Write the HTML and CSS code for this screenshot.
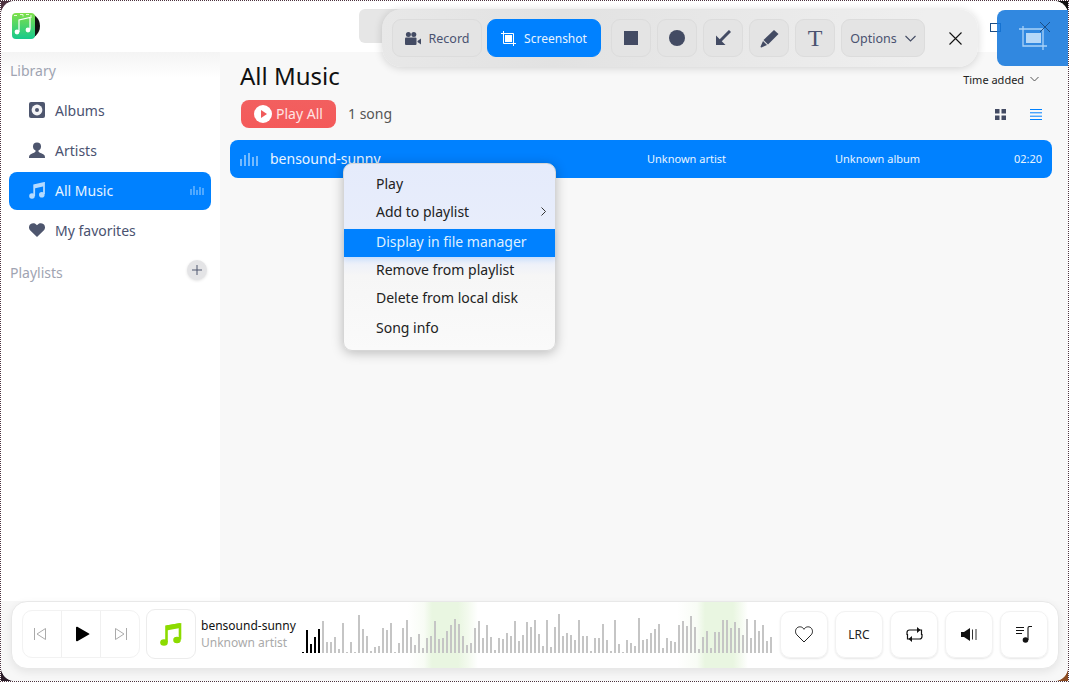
FILE: index.html
```html
<!DOCTYPE html>
<html lang="en">
<head>
  <meta charset="UTF-8" />
  <title>Music</title>
  <link rel="stylesheet" href="styles.css">
</head>
<body>
<div class="screen">
  <div class="window">

    <!-- Title bar -->
    <div class="titlebar">
      <svg class="logo" width="28" height="26" viewBox="0 0 28 26">
        <defs><linearGradient id="logoGrad" x1="0" y1="0" x2="0" y2="1"><stop offset="0" stop-color="#7fe04a"/><stop offset="1" stop-color="#16c98c"/></linearGradient></defs>
        <circle cx="15" cy="13" r="13" fill="#111"/>
        <rect x="0" y="0" width="23" height="26" rx="4" fill="url(#logoGrad)"/>
        <path d="M2 2.500h3M8 1.500h3v2M14 1.500h3M19 2v3" stroke="#e4fbd8" stroke-width="1" fill="none"/>
        <path d="M7 19V7l11-2.500v12" fill="none" stroke="#fff" stroke-width="1.200"/>
        <circle cx="5" cy="19" r="2.400" fill="#fff"/><circle cx="16" cy="17" r="2.400" fill="#fff"/>
      </svg>
      <div class="searchbox"></div>
      <span class="win-max"></span>
      <svg class="win-close" width="12" height="12" viewBox="0 0 12 12"><path d="M1 1l10 10M11 1L1 11" stroke="#1d4f86" stroke-width="1" fill="none"/></svg>
    </div>

    <div class="main">
      <!-- Sidebar -->
      <div class="sidebar">
        <div class="side-label">Library</div>
        <div class="side-item">
          <svg width="16" height="16" viewBox="0 0 16 16"><rect width="16" height="16" rx="2" fill="#4e566e"/><circle cx="8" cy="8" r="5.400" fill="#f4f4f6"/><circle cx="8" cy="8" r="2" fill="#4e566e"/></svg>
          <span>Albums</span>
        </div>
        <div class="side-item">
          <svg width="16" height="16" viewBox="0 0 16 16"><circle cx="8" cy="4.400" r="4" fill="#4e566e"/><path d="M6.500 8h3v1.600c0 1 3.400 1.600 5.500 3.200.7.6 1 1.400 1 3.200H0c0-1.800.3-2.600 1-3.200 2.100-1.600 5.500-2.200 5.500-3.200z" fill="#4e566e"/></svg>
          <span>Artists</span>
        </div>
        <div class="side-item active">
          <svg width="16" height="17" viewBox="0 0 16 17"><path d="M5.200 14V3.200L15 1v11" fill="none" stroke="#b5dbff" stroke-width="1.800"/><path d="M5.200 3.200L15 1v3.200L5.200 6.400z" fill="#b5dbff"/><circle cx="3" cy="14" r="2.800" fill="#b5dbff"/><circle cx="12.800" cy="12.800" r="2.800" fill="#b5dbff"/></svg>
          <span>All Music</span>
          <svg class="mini-bars" width="14" height="10" viewBox="0 0 14 10"><path d="M1 4v6M4 1v9M7 5v5M10 2v8M13 3v7" stroke="#9fd0ff" stroke-width="1" fill="none"/></svg>
        </div>
        <div class="side-item">
          <svg width="16" height="14" viewBox="0 0 16 14"><path d="M8 14L1.300 7.600C-.6 5.700-.3 2.800 1.400 1.300 3.300-.4 6.200-.2 8 2.200 9.800-.2 12.700-.4 14.600 1.300c1.700 1.500 2 4.400.1 6.300z" fill="#4e566e"/></svg>
          <span>My favorites</span>
        </div>
        <div class="side-label playlists">
          Playlists
          <span class="add-btn"><svg width="10" height="10" viewBox="0 0 10 10"><path d="M5 0v10M0 5h10" stroke="#4e566e" stroke-width="1" fill="none"/></svg></span>
        </div>
      </div>

      <!-- Song list -->
      <div class="content">
        <div class="head-row">
          <h1>All Music</h1>
          <div class="sort">Time added
            <svg width="9" height="6" viewBox="0 0 9 6"><path d="M.5 1l4 4 4-4" stroke="#555" stroke-width="1" fill="none"/></svg>
          </div>
        </div>
        <div class="action-row">
          <div class="play-all">
            <svg width="18" height="18" viewBox="0 0 18 18"><circle cx="9" cy="9" r="9" fill="#fff"/><path d="M7 5l6 4-6 4z" fill="#f05a5a"/></svg>
            Play All
          </div>
          <span class="count">1 song</span>
          <svg class="view-grid" width="11" height="11" viewBox="0 0 11 11"><path d="M0 0h4.500v4.500H0zM6.500 0H11v4.500H6.500zM0 6.500h4.500V11H0zM6.500 6.500H11V11H6.500z" fill="#434b63"/></svg>
          <svg class="view-list" width="12" height="11" viewBox="0 0 12 11"><path d="M0 .5h12M0 3.800h12M0 7.200h12M0 10.500h12" stroke="#0081ff" stroke-width="1" fill="none"/></svg>
        </div>
        <div class="song-row">
          <svg width="18" height="13" viewBox="0 0 18 13"><path d="M1 6v7M5 2v11M9 0v13M13 4v9M17 3v10" stroke="#e8f4ff" stroke-width="1" fill="none"/></svg>
          <span class="song-title">bensound-sunny</span>
          <span class="song-artist">Unknown artist</span>
          <span class="song-album">Unknown album</span>
          <span class="song-time">02:20</span>
        </div>
      </div>
    </div>

    <!-- Player -->
    <div class="player-wrap">
      <div class="player">
        <div class="transport">
          <div class="t-btn"><svg class="t-prev" width="12" height="12" viewBox="0 0 12 12"><path d="M.5 0v12M11.500.5v11L3 6z" stroke="#aaa" stroke-width="1" fill="none"/></svg></div>
          <div class="t-btn mid"><svg class="t-play" width="15" height="16" viewBox="0 0 15 16"><path d="M1 1.500v13c0 .7.7 1.100 1.300.7L14 8.600c.5-.3.5-.9 0-1.200L2.300.8C1.700.4 1 .8 1 1.500z" fill="#000"/></svg></div>
          <div class="t-btn"><svg class="t-next" width="12" height="12" viewBox="0 0 12 12"><path d="M11.500 0v12M.5.5v11L9 6z" stroke="#aaa" stroke-width="1" fill="none"/></svg></div>
        </div>
        <div class="cover">
          <svg width="22" height="26" viewBox="0 0 22 26"><path d="M6.500 21V5.500L20 3.500v15" fill="none" stroke="#8cdb00" stroke-width="2.600"/><path d="M6.500 4.500L20 2v5L6.500 9.500z" fill="#8cdb00"/><ellipse cx="4" cy="21.500" rx="3.800" ry="3.200" fill="#8cdb00"/><ellipse cx="17" cy="19" rx="3.800" ry="3.200" fill="#8cdb00"/></svg>
        </div>
        <div class="track-info">
          <div class="track-title">bensound-sunny</div>
          <div class="track-artist">Unknown artist</div>
        </div>
        <div class="wave" id="wave"></div>
        <div class="p-buttons">
          <div class="p-btn"><svg width="18" height="17" viewBox="0 0 18 17"><path d="M9 16L1.900 8.900C-.1 6.900.2 3.500 2 1.900 4 .2 7.400.4 9 3.300 10.600.4 14 .2 16 1.900c1.800 1.600 2.100 5 .1 7z" fill="none" stroke="#222" stroke-width="1"/></svg></div>
          <div class="p-btn lrc">LRC</div>
          <div class="p-btn"><svg width="17" height="15" viewBox="0 0 17 15"><path d="M1 8V5.500C1 4 2 3 3.500 3H15.500V8M16 7v2.500c0 1.500-1 2.500-2.500 2.500H1.500V7" fill="none" stroke="#111" stroke-width="1.200"/><path d="M11 0l3.500 3L11 6zM6 9l-3.500 3L6 15z" fill="#111"/></svg></div>
          <div class="p-btn"><svg width="16" height="13" viewBox="0 0 16 13"><path d="M0 4h3l6-4v13L3 9H0z" fill="#111"/><path d="M11.500 1.500v10M15 1v11" stroke="#333" stroke-width="1" fill="none"/></svg></div>
          <div class="p-btn"><svg width="17" height="17" viewBox="0 0 17 17"><path d="M0 1.500h8M0 4.500h8M0 7.500h6" stroke="#111" stroke-width="1" fill="none"/><path d="M12 14V2c0-1 .6-1.500 1.500-1.500H16" stroke="#111" stroke-width="1.100" fill="none"/><circle cx="9.500" cy="14" r="2.800" fill="#111"/></svg></div>
        </div>
      </div>
    </div>
  </div>

  <!-- Context menu -->
  <div class="menu">
    <div class="menu-item">Play</div>
    <div class="menu-item">Add to playlist
      <svg width="5" height="9" viewBox="0 0 5 9"><path d="M.5.5l4 4-4 4" stroke="#333" stroke-width="1" fill="none"/></svg>
    </div>
    <div class="menu-item selected">Display in file manager</div>
    <div class="menu-item">Remove from playlist</div>
    <div class="menu-item">Delete from local disk</div>
    <div class="menu-item last">Song info</div>
  </div>

  <!-- Screen capture toolbar -->
  <div class="toolbar">
    <div class="tool wide record">
      <svg width="16" height="13" viewBox="0 0 16 13"><circle cx="3.400" cy="2.600" r="2.500" fill="#434b63"/><circle cx="8.800" cy="2.600" r="2.500" fill="#434b63"/><rect x="0" y="5.500" width="11.500" height="7.500" rx="1" fill="#434b63"/><path d="M12.500 9l3.500-2.500v6L12.500 10z" fill="#434b63"/></svg>
      Record
    </div>
    <div class="tool wide shot">
      <svg width="15" height="15" viewBox="0 0 15 15"><path d="M2.500 0v12.500H15M0 2.500h12.500V15" fill="none" stroke="#fff" stroke-width="1"/><rect x="4" y="4" width="7" height="7" fill="#fff"/></svg>
      Screenshot
    </div>
    <div class="tool"><span class="shape-rect"></span></div>
    <div class="tool"><span class="shape-circle"></span></div>
    <div class="tool"><svg width="16" height="16" viewBox="0 0 16 16"><path d="M15 1L5 11" stroke="#434b63" stroke-width="3" fill="none"/><path d="M1 5.500V15h9.500z" fill="#434b63"/></svg></div>
    <div class="tool"><svg width="19" height="19" viewBox="0 0 19 19"><path d="M14 1l4.500 4L8 15.500 3.500 11z" fill="#434b63"/><path d="M3 12l4 4-5.500 2.500c-.5.200-1.100-.3-.9-.9z" fill="#434b63"/></svg></div>
    <div class="tool serif-t">T</div>
    <div class="tool wide options">
      Options
      <svg width="11" height="7" viewBox="0 0 11 7"><path d="M.5 1l5 5 5-5" stroke="#434b63" stroke-width="1.100" fill="none"/></svg>
    </div>
    <svg class="tool-close" width="13" height="13" viewBox="0 0 13 13"><path d="M.5.5l12 12M12.500.5l-12 12" stroke="#111" stroke-width="1.100" fill="none"/></svg>
  </div>

  <!-- Capture mode badge -->
  <div class="crop-badge">
    <svg width="28" height="24" viewBox="0 0 28 24"><path d="M4 0v20h24M0 3h24v21" fill="none" stroke="#a9d2f7" stroke-width="1.300"/><rect x="7" y="7" width="15" height="10" fill="#b6d8f8"/></svg>
  </div>
</div>
<script src="wave.js"></script>
</body>
</html>
```

FILE: styles.css
```css
* { box-sizing: border-box; margin:0; padding:0 }
html, body { height: 100%; }
body {
  font-family: 'Noto Sans', sans-serif;
  background: #fff;
  overflow: hidden;
}

.screen {
  position: relative;
  height: 100vh;
  border: 1px dotted #4d3340;
  background: conic-gradient(#111 25%, #8a4a20 25% 50%, #2a1c28 50% 75%, #4d3340 75%);
  background-clip: padding-box;
  overflow: hidden;
}

.window {
  height: 100%;
  display: flex;
  flex-direction: column;
  background: #fff;
  border-radius: 14px;
  overflow: hidden;
}

/* title bar */
.titlebar {
  height: 51px;
  flex-shrink: 0;
  display: flex;
  align-items: flex-start;
  background: #fff;
}
.logo { margin: 12px 0 0 11px; }
.searchbox {
  width: 330px;
  height: 34px;
  margin: 8px 0 0 319px;
  background: #e6e6e6;
  border-radius: 6px;
}
.win-max {
  width: 11px;
  height: 9px;
  margin: 22px 0 0 301px;
  border: 1px solid #1d4f86;
}
.win-close { margin: 20px 0 0 38px; position: relative; z-index: 5; }

.main { flex: 1; display: flex; min-height: 0; }

/* sidebar */
.sidebar {
  width: 219px;
  flex-shrink: 0;
  padding: 0 9px 0 8px;
  background: linear-gradient(#f4f4f4, #fff 26px);
}
.side-label {
  height: 36px;
  margin-bottom: 4px;
  padding: 0 1px;
  display: flex;
  align-items: center;
  font-size: 14px;
  color: #9fa4b2;
}
.side-item {
  height: 38px;
  margin-bottom: 2px;
  padding: 0 0 2px 20px;
  display: flex;
  align-items: center;
  gap: 10px;
  border-radius: 8px;
  font-size: 14px;
  color: #4a5270;
}
.side-item svg { flex-shrink: 0; }
.side-item.active { background: #0081ff; color: #e6f3ff; }
.mini-bars { margin-left: auto; margin-right: 7px; }
.playlists {
  justify-content: space-between;
  margin: 7px 0 0;
  height: 30px;
  padding-right: 4px;
}
.add-btn {
  width: 20px;
  height: 20px;
  margin-top: -4px;
  display: flex;
  align-items: center;
  justify-content: center;
  border-radius: 50%;
  background: #e4e4e6;
  box-shadow: 0 1px 3px rgba(0,0,0,0.12);
}

/* song list */
.content {
  flex: 1;
  padding: 0 16px 0 10px;
  background: #f8f8f8;
}
.head-row {
  height: 48px;
  padding: 0 2px 2px 10px;
  display: flex;
  align-items: center;
  justify-content: space-between;
}
h1 { font-size: 24px; font-weight: 400; color: #111; }
.sort {
  margin-top: 8px;
  display: flex;
  align-items: center;
  gap: 6px;
  padding-right: 11px;
  font-size: 11px;
  color: #222;
}
.action-row {
  height: 28px;
  padding: 0 10px 0 11px;
  display: flex;
  align-items: center;
  font-size: 14px;
}
.play-all {
  width: 95px;
  height: 28px;
  padding: 0 0 2px 13px;
  display: flex;
  align-items: center;
  gap: 4px;
  border-radius: 8px;
  background: linear-gradient(#f25f5f, #f45a5a);
  color: #ffe3e3;
}
.play-all svg { margin-top: 2px; }
.count { margin: 0 0 2px 12px; color: #555; }
.view-grid { margin-left: auto; }
.view-list { margin-left: 24px; }
.song-row {
  height: 38px;
  margin-top: 12px;
  padding: 0 10px 2px;
  display: flex;
  align-items: center;
  border-radius: 8px;
  background: #0081ff;
  color: #e8f4ff;
  font-size: 11px;
}
.song-row svg { margin-top: 2px; }
.song-title { margin-left: 12px; width: 377px; font-size: 14px; }
.song-artist { width: 188px; }
.song-album { width: 179px; }

/* player */
.player-wrap {
  height: 80px;
  flex-shrink: 0;
  padding: 0 9px 0 10px;
  background: #f7f7f7;
}
.player {
  height: 68px;
  padding: 0 10px 2px;
  display: flex;
  align-items: center;
  background: #fff;
  border: 1px solid #e8e8e8;
  border-radius: 16px;
  box-shadow: 0 3px 8px rgba(0,0,0,0.08);
}
.transport {
  width: 118px;
  height: 48px;
  display: flex;
  flex-shrink: 0;
  border: 1px solid #f2f2f2;
  border-radius: 10px;
}
.t-btn { flex: 1; display: flex; align-items: center; justify-content: center; }
.t-btn.mid { border-left: 1px solid #f0f0f0; border-right: 1px solid #f0f0f0; }
.t-prev { margin-right: 4px; }
.t-play { margin-left: 3px; }
.t-next { margin-left: 2px; }
.cover {
  width: 50px;
  height: 50px;
  margin-left: 6px;
  flex-shrink: 0;
  display: flex;
  align-items: center;
  justify-content: center;
  border: 1px solid #ececec;
  border-radius: 9px;
}
.track-info { width: 101px; margin-left: 5px; flex-shrink: 0; white-space: nowrap; }
.track-title { font-size: 12px; line-height: 17px; color: #111; }
.track-artist { font-size: 12px; line-height: 17px; color: #aaa; }
.wave {
  width: 470px;
  height: 66px;
  align-self: flex-start;
  padding-bottom: 15px;
  flex-shrink: 0;
  display: flex;
  align-items: flex-end;
  gap: 2px;
  background: linear-gradient(90deg,
    #fff 106px, #f8fcf5 122px, #e9f6e1 130px, #e9f6e1 156px, #f3faee 166px, #fff 176px,
    #fff 375px, #f8fcf5 395px, #e9f6e1 403px, #e9f6e1 431px, #f3faee 438px, #fff 446px);
}
.wave span { width: 2px; flex-shrink: 0; background: #c5c5c5; }
.wave span.done { background: #000; }
.p-buttons { margin-left: 8px; display: flex; gap: 7px; flex-shrink: 0; }
.p-btn {
  width: 48px;
  height: 47px;
  display: flex;
  align-items: center;
  justify-content: center;
  border: 1px solid #f2f2f2;
  border-radius: 10px;
  box-shadow: 0 1px 2px rgba(0,0,0,0.1);
}
.lrc { font-size: 12px; color: #222; }

/* context menu */
.menu {
  position: absolute;
  left: 342px;
  top: 162px;
  width: 213px;
  height: 188px;
  padding-top: 5px;
  border: 1px solid #d6d6d6;
  border-radius: 9px;
  background: linear-gradient(#e5ebfb, #e9eefb 50%, #f6f6f6 60%, #fafafa);
  box-shadow: 0 2px 12px rgba(0,0,0,0.25);
  font-size: 14px;
  color: #222;
}
.menu-item {
  height: 28px;
  padding: 0 9px 0 32px;
  display: flex;
  align-items: center;
  justify-content: space-between;
}
.menu-item.selected {
  margin: 4px 0 -2px;
  padding-bottom: 4px;
  background: #0081ff;
  color: #dff0ff;
  box-shadow: 0 3px 5px rgba(0,129,255,0.15);
}
.menu-item.last { margin-top: 2px; }

/* capture toolbar */
.toolbar {
  position: absolute;
  left: 381px;
  top: 8px;
  width: 596px;
  height: 58px;
  padding: 0 10px;
  display: flex;
  align-items: center;
  gap: 6px;
  border-radius: 20px;
  background: linear-gradient(100deg, #e8e8e8, #e2e2e2 30%, #efefef 90%);
  box-shadow: 0 1px 8px rgba(0,0,0,0.16);
}
.tool {
  width: 40px;
  height: 38px;
  flex-shrink: 0;
  display: flex;
  align-items: center;
  justify-content: center;
  border: 1px solid #dcdcdc;
  border-radius: 9px;
  background: #e4e4e4;
  font-size: 12.500px;
  color: #4a5270;
}
.tool.wide { gap: 8px; }
.record { width: 90px; margin-right: -1px; }
.shot {
  width: 114px;
  margin-right: 4px;
  background: #0081ff;
  border-color: #0081ff;
  color: #e6f3ff;
  font-size: 12px;
}
.options { width: 84px; }
.shape-rect { width: 14px; height: 14px; background: #434b63; }
.shape-circle { width: 16px; height: 16px; border-radius: 50%; background: #434b63; }
.serif-t { font-family: 'Liberation Serif', serif; font-size: 24px; }
.tool-close { margin-left: 18px; }

.crop-badge {
  position: absolute;
  left: 996px;
  top: 9px;
  width: 72px;
  height: 56px;
  display: flex;
  align-items: center;
  justify-content: center;
  border-radius: 8px 0 0 8px;
  background: rgba(20,120,220,0.88);
}
```

FILE: wave.js
```js
// bar heights of the waveform, left to right
const heights = [
  1,23,9,16,24,32,11,11,16,4,30,1,11,1,38,
  24,17,2,6,7,25,23,30,1,10,25,33,16,8,19,5,15,17,32,14,15,22,28,34,29,17,8,10,25,32,15,28,16,3,15,14,20,17,32,12,18,31,26,33,19,7,33,6,26,39,17,20,18,13,33,17,17,2,15,15,29,13,2,33,9,1,13,10,7,35,13,14,20,24,29,5,15,12,11,28,32,27,37,26,4,16,22,5,21,21,
  33,33,25,31,25,18,34,15,33,22,28,12,16
];
const waveEl = document.getElementById('wave');
heights.forEach((h, i) => {
  const bar = document.createElement('span');
  bar.style.height = h + 'px';
  if (i < 5) bar.className = 'done';
  waveEl.appendChild(bar);
});
```
